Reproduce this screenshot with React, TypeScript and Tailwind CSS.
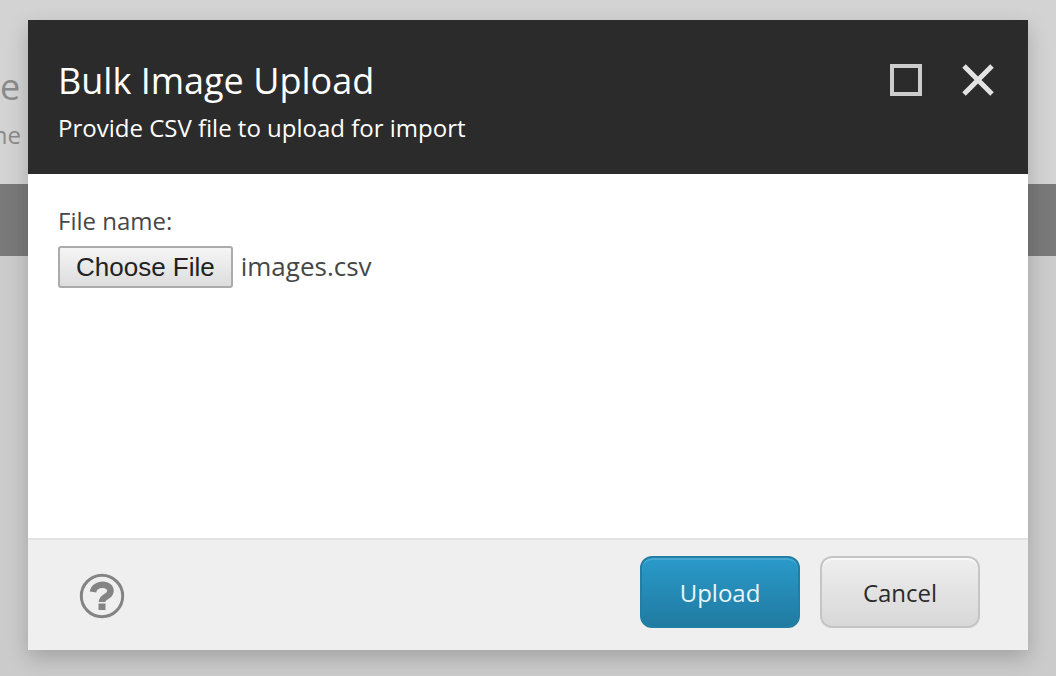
import { useRef, useState } from 'react';

function PageBehind() {
  return (
    <div className="flex min-h-screen flex-col bg-[#cbcbcb] text-[#8a8a8a]" aria-hidden="true">
      <div className="flex h-[184px] flex-col items-start bg-[#d3d3d3] pt-[65px]">
        <div className="text-4xl leading-11">e</div>
        <div className="flex w-[21px] justify-end overflow-hidden pt-[10px] text-2xl leading-8">ne</div>
      </div>
      <div className="h-18 bg-[#797979]" />
    </div>
  );
}

export default function App() {
  const fileInput = useRef<HTMLInputElement>(null);
  const [fileName, setFileName] = useState('images.csv');

  return (
    <div className="font-['Open_Sans','Noto_Sans',sans-serif]">
      <PageBehind />
      <div className="absolute inset-0 flex px-7 pt-5 pb-[26px]">
        <section
          role="dialog"
          aria-labelledby="dialog-title"
          className="flex flex-1 flex-col bg-white shadow-[0_8px_20px_rgba(0,0,0,0.2)]"
        >
          <header className="flex items-start justify-between bg-[#2b2b2b] pt-9 pr-8 pb-7 pl-[30px] text-white">
            <div>
              <h1 id="dialog-title" className="text-4xl leading-[50px]">
                Bulk Image Upload
              </h1>
              <p className="pt-1 text-2xl leading-9">Provide CSV file to upload for import</p>
            </div>
            <div className="flex gap-[38px] pt-2">
              <button type="button" aria-label="Maximize" className="size-8 border-4 border-[#cccccc]" />
              <button type="button" aria-label="Close" className="size-9">
                <svg viewBox="0 0 36 36" className="size-9" fill="none" stroke="#e3e3e3" strokeWidth="5">
                  <path d="M4 2l28 28M32 2L4 30" />
                </svg>
              </button>
            </div>
          </header>

          <div className="flex flex-1 flex-col px-[30px] pt-[31px] text-[#474747]">
            <label htmlFor="csv-file" className="text-2xl leading-8">
              File name:
            </label>
            <div className="flex items-start gap-2 pt-[9px]">
              <input
                ref={fileInput}
                id="csv-file"
                type="file"
                accept=".csv"
                className="sr-only"
                onChange={(event) => setFileName(event.target.files?.[0]?.name ?? 'images.csv')}
              />
              <button
                type="button"
                onClick={() => fileInput.current?.click()}
                className="h-[42px] rounded-[3px] border-2 border-[#ababab] bg-linear-to-b from-[#f5f5f5] to-[#dddddd] px-4 font-['Liberation_Sans',Arial,sans-serif] text-[26px] leading-8 text-[#222222]"
              >
                Choose File
              </button>
              <span className="text-[26px] leading-10">{fileName}</span>
            </div>
          </div>

          <footer className="flex items-end justify-between border-t-2 border-[#e3e3e3] bg-[#efefef] pt-4 pr-12 pb-[22px] pl-[51px]">
            <button type="button" aria-label="Help" className="mb-[9px] size-[46px]">
              <svg viewBox="0 0 46 46" className="size-[46px]" fill="none" stroke="#848484">
                <circle cx="23" cy="23" r="20.7" strokeWidth="3" />
                <path d="M14 19C15.500 9.500 31.500 9.500 31.500 18C31.500 24 23 23 23 29" strokeWidth="6.500" />
                <path d="M23 30.500v6.500" strokeWidth="7" />
              </svg>
            </button>
            <div className="flex gap-5">
              <button
                type="button"
                className="h-18 w-40 rounded-xl border-2 border-[#217fa6] bg-linear-to-b from-[#2a9aca] to-[#207ba1] pt-0.5 text-2xl text-[#e9f5fa] shadow-[inset_0_2px_0_#47a7d0]"
              >
                Upload
              </button>
              <button
                type="button"
                className="h-18 w-40 rounded-xl border-2 border-[#c5c5c5] bg-linear-to-b from-[#eeeeee] to-[#d8d8d8] pt-0.5 text-2xl text-[#2b2b2b] shadow-[inset_0_2px_0_#f8f8f8]"
              >
                Cancel
              </button>
            </div>
          </footer>
        </section>
      </div>
    </div>
  );
}
